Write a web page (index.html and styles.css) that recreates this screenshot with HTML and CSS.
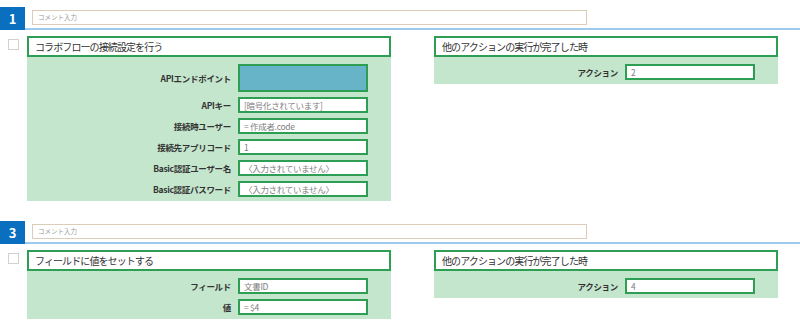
FILE: index.html
```html
<!DOCTYPE html>
<html lang="ja">
<head>
  <meta charset="UTF-8" />
  <title>フロー設定</title>
  <link rel="stylesheet" href="styles.css">
</head>
<body>
  <div class="step">
    <div class="step-head">
      <div class="step-no">1</div>
      <div class="step-bar">
        <div class="comment">コメント入力</div>
      </div>
    </div>
    <div class="step-body">
      <div class="check"></div>
      <div class="panel panel-main">
        <div class="panel-title">コラボフローの接続設定を行う</div>
        <div class="panel-fields">
          <div class="label">APIエンドポイント</div>
          <div class="field field-tall"></div>
          <div class="label">APIキー</div>
          <div class="field">[暗号化されています]</div>
          <div class="label">接続時ユーザー</div>
          <div class="field">= 作成者.code</div>
          <div class="label">接続先アプリコード</div>
          <div class="field">1</div>
          <div class="label">Basic認証ユーザー名</div>
          <div class="field">〈入力されていません〉</div>
          <div class="label">Basic認証パスワード</div>
          <div class="field">〈入力されていません〉</div>
        </div>
      </div>
      <div class="panel panel-side">
        <div class="panel-title">他のアクションの実行が完了した時</div>
        <div class="panel-fields">
          <div class="label">アクション</div>
          <div class="field">2</div>
        </div>
      </div>
    </div>
  </div>

  <div class="step">
    <div class="step-head">
      <div class="step-no">3</div>
      <div class="step-bar">
        <div class="comment">コメント入力</div>
      </div>
    </div>
    <div class="step-body">
      <div class="check"></div>
      <div class="panel panel-main">
        <div class="panel-title">フィールドに値をセットする</div>
        <div class="panel-fields">
          <div class="label">フィールド</div>
          <div class="field">文書ID</div>
          <div class="label">値</div>
          <div class="field">= $4</div>
        </div>
      </div>
      <div class="panel panel-side">
        <div class="panel-title">他のアクションの実行が完了した時</div>
        <div class="panel-fields">
          <div class="label">アクション</div>
          <div class="field">4</div>
        </div>
      </div>
    </div>
  </div>
</body>
</html>
```

FILE: styles.css
```css
body {
  margin: 0;
  padding: 7px 0 0;
  background: #fff;
  color: #333;
  font-family: "Noto Sans CJK JP", "Noto Sans", sans-serif;
}

.step {
  margin-bottom: 20px;
}

.step-head {
  display: flex;
  align-items: flex-end;
}

.step-no {
  width: 25px;
  height: 23px;
  background: #0b6fc0;
  color: #fff;
  font-weight: bold;
  font-size: 13px;
  line-height: 23px;
  text-align: center;
}

.step-bar {
  flex: 1;
  border-bottom: 2px solid #9ccaee;
  padding: 0 0 3px 7px;
}

.comment {
  width: 548px;
  height: 13px;
  border: 1px solid #ddccba;
  padding-left: 5px;
  font-size: 6.5px;
  line-height: 13px;
  color: #999;
}

.step-body {
  display: flex;
  align-items: flex-start;
  padding: 6px 0 0 8px;
}

.check {
  width: 9px;
  height: 9px;
  margin-top: 3px;
  margin-right: 8px;
  border: 1px solid #d4d0cc;
  background: #fff;
}

.panel-main {
  width: 364px;
}

.panel-side {
  width: 344px;
  margin-left: 43px;
}

.panel-title {
  height: 17px;
  border: 2px solid #2f9e55;
  background: #fff;
  padding-left: 6px;
  font-size: 10px;
  letter-spacing: -0.9px;
  line-height: 17px;
  color: #333;
}

.panel-fields {
  display: grid;
  grid-template-columns: 1fr 130px;
  column-gap: 7px;
  row-gap: 5px;
  align-items: center;
  padding: 7px 23px 4px 0;
  background: #c4e6cd;
}

.label {
  text-align: right;
  font-size: 8.5px;
  letter-spacing: -0.3px;
  font-weight: bold;
  color: #333;
}

.field {
  height: 12px;
  border: 2px solid #2f9e55;
  background: #fff;
  padding-left: 4px;
  font-size: 8.5px;
  letter-spacing: -0.3px;
  line-height: 12px;
  color: #808080;
  white-space: nowrap;
}

.field-tall {
  height: 24px;
  background: #67b3c8;
}
```
